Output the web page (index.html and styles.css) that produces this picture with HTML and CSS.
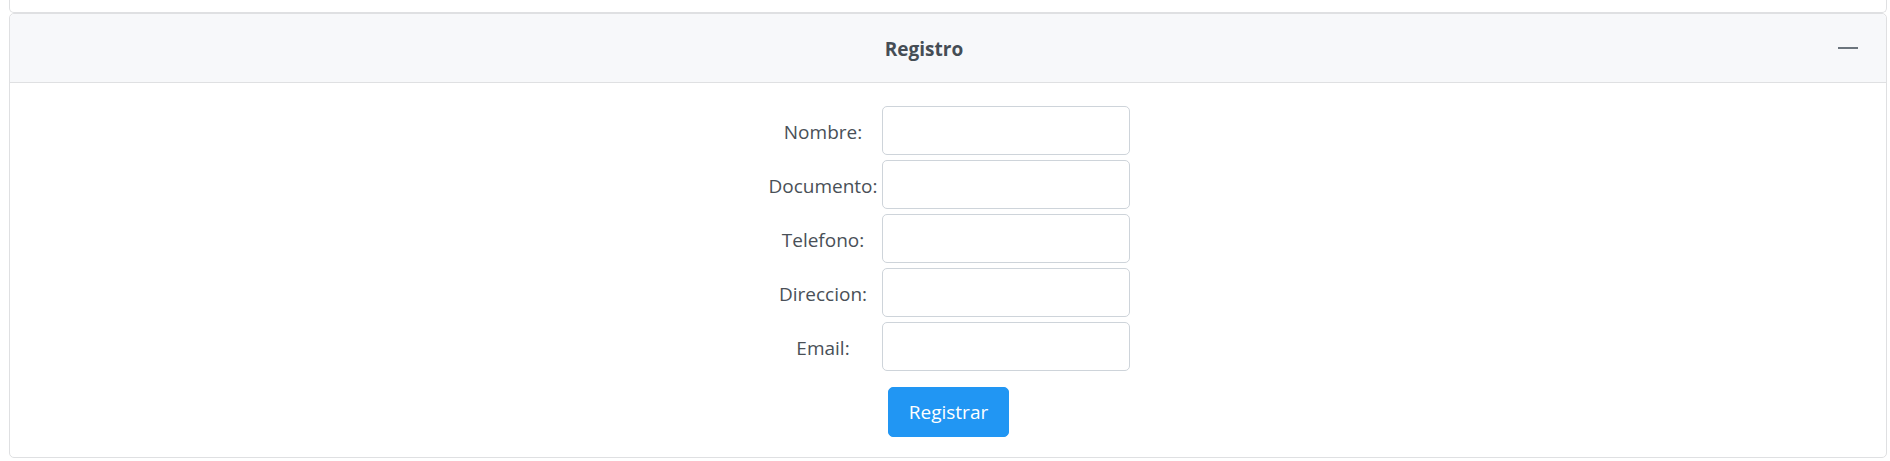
FILE: index.html
```html
<!DOCTYPE html>
<html lang="es">
<head>
<meta charset="utf-8">
<title>Registro</title>
<link rel="stylesheet" href="styles.css">
</head>
<body>
<div class="page">
  <div class="card card-prev"></div>
  <div class="card">
    <div class="card-header">
      <h3 class="card-title">Registro</h3>
      <button class="btn-tool" type="button" aria-label="Minimizar"><span class="minus"></span></button>
    </div>
    <div class="card-body">
      <form class="form">
        <div class="fields">
          <label class="lbl" for="nombre">Nombre:</label>
          <input class="inp" id="nombre" type="text">
          <label class="lbl" for="documento">Documento:</label>
          <input class="inp" id="documento" type="text">
          <label class="lbl" for="telefono">Telefono:</label>
          <input class="inp" id="telefono" type="text">
          <label class="lbl" for="direccion">Direccion:</label>
          <input class="inp" id="direccion" type="text">
          <label class="lbl" for="email">Email:</label>
          <input class="inp" id="email" type="text">
        </div>
        <button class="btn-primary" type="button">Registrar</button>
      </form>
    </div>
  </div>
</div>
</body>
</html>
```

FILE: styles.css
```css
* { box-sizing: border-box; }
html, body { margin: 0; padding: 0; background: #ffffff; }
body {
  font-family: "Open Sans", "Noto Sans", "Liberation Sans", sans-serif;
  font-size: 19px;
  color: #495057;
}
.page {
  padding: 0 3px 0 9px;
}
.card {
  border: 1px solid #dfe0e2;
  border-radius: 5px;
  background: #fff;
}
.card-prev {
  height: 13px;
  border-top: none;
  border-radius: 0 0 5px 5px;
}
.card-header {
  display: flex;
  align-items: center;
  height: 69px;
  padding: 0 28px 0 0;
  background: #f7f8fa;
  border-bottom: 1px solid #dfe0e2;
  border-radius: 5px 5px 0 0;
}
.card-title {
  flex: 1;
  margin: 0;
  padding-top: 2px;
  text-align: center;
  font-size: 19px;
  font-weight: 700;
  color: #454d55;
}
.btn-tool {
  width: 20px;
  height: 20px;
  padding: 0;
  border: none;
  background: transparent;
  display: flex;
  align-items: center;
  justify-content: center;
}
.minus {
  display: block;
  width: 20px;
  height: 2px;
  background: #6c757d;
}
.card-body {
  padding: 23px 20px 20px;
}
.form {
  display: flex;
  flex-direction: column;
  align-items: center;
  gap: 16px;
}
.fields {
  display: grid;
  grid-template-columns: 113px 248px;
  column-gap: 2px;
  row-gap: 5px;
  align-items: center;
}
.lbl {
  text-align: center;
  color: #495057;
  padding-top: 3px;
}
.inp {
  height: 49px;
  border: 1px solid #ced4da;
  border-radius: 5px;
  background: #fff;
  font: inherit;
  padding: 0 15px;
}
.btn-primary {
  width: 121px;
  height: 50px;
  border: 1px solid #2196f3;
  border-radius: 5px;
  background: #2196f3;
  color: #fff;
  font: inherit;
  font-size: 19px;
  padding: 0;
  margin-left: 1px;
}
```
